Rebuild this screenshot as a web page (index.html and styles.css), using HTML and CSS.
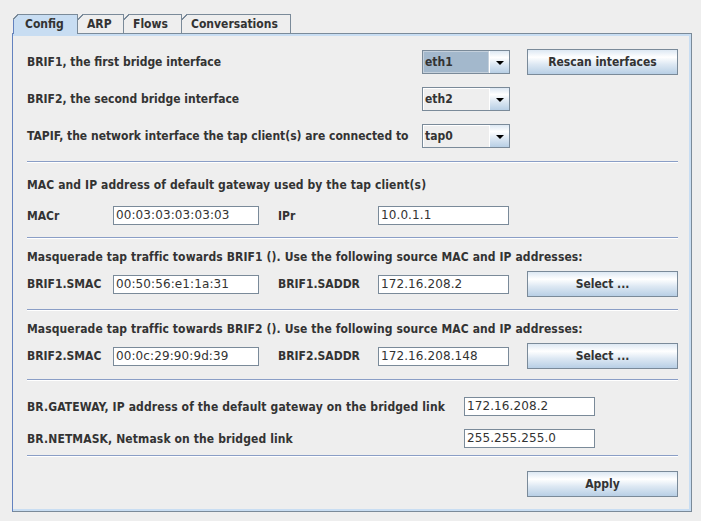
FILE: index.html
```html
<!DOCTYPE html>
<html>
<head>
<meta charset="utf-8">
<link rel="stylesheet" href="styles.css">
</head>
<body>
<div class="tabs">
  <div class="tab sel t-config">Config</div>
  <div class="tab t-arp">ARP</div>
  <div class="tab t-flows">Flows</div>
  <div class="tab t-conv">Conversations</div>
</div>
<div class="panel">
  <div class="content">
    <div class="irow">
      <div class="lbl-if">BRIF1, the first bridge interface</div>
      <div class="combo focus"><div class="cval">eth1</div><div class="carrow"><svg width="8" height="4" viewBox="0 0 8 4"><path d="M0 0h8L4 4z" fill="#000"/></svg></div></div>
      <div class="btn">Rescan interfaces</div>
    </div>
    <div class="irow gap11">
      <div class="lbl-if">BRIF2, the second bridge interface</div>
      <div class="combo"><div class="cval">eth2</div><div class="carrow"><svg width="8" height="4" viewBox="0 0 8 4"><path d="M0 0h8L4 4z" fill="#000"/></svg></div></div>
    </div>
    <div class="irow gap11">
      <div class="lbl-if">TAPIF, the network interface the tap client(s) are connected to</div>
      <div class="combo"><div class="cval">tap0</div><div class="carrow"><svg width="8" height="4" viewBox="0 0 8 4"><path d="M0 0h8L4 4z" fill="#000"/></svg></div></div>
    </div>

    <div class="sep m12"></div>
    <div class="head m14">MAC and IP address of default gateway used by the tap client(s)</div>
    <div class="frow m13">
      <div class="lbl1">MACr</div>
      <div class="field f1">00:03:03:03:03:03</div>
      <div class="lbl2">IPr</div>
      <div class="field f2">10.0.1.1</div>
    </div>

    <div class="sep m12"></div>
    <div class="head m10">Masquerade tap traffic towards BRIF1 (). Use the following source MAC and IP addresses:</div>
    <div class="brow m6">
      <div class="lbl1">BRIF1.SMAC</div>
      <div class="field f1">00:50:56:e1:1a:31</div>
      <div class="lbl2">BRIF1.SADDR</div>
      <div class="field f2">172.16.208.2</div>
      <div class="btn">Select ...</div>
    </div>

    <div class="sep m12"></div>
    <div class="head m10">Masquerade tap traffic towards BRIF2 (). Use the following source MAC and IP addresses:</div>
    <div class="brow m6">
      <div class="lbl1">BRIF2.SMAC</div>
      <div class="field f1">00:0c:29:90:9d:39</div>
      <div class="lbl2">BRIF2.SADDR</div>
      <div class="field f2">172.16.208.148</div>
      <div class="btn">Select ...</div>
    </div>

    <div class="sep m10"></div>
    <div class="frow m16">
      <div class="lbl-gw">BR.GATEWAY, IP address of the default gateway on the bridged link</div>
      <div class="field f2">172.16.208.2</div>
    </div>
    <div class="frow m13">
      <div class="lbl-gw">BR.NETMASK, Netmask on the bridged link</div>
      <div class="field f2">255.255.255.0</div>
    </div>

    <div class="sep m7"></div>
    <div class="brow m14">
      <div class="btn">Apply</div>
    </div>
  </div>
</div>
</body>
</html>
```
FILE: styles.css
```css
html, body {
  margin: 0;
  padding: 0;
}
body {
  width: 701px;
  height: 521px;
  overflow: hidden;
  background: #eeeeee;
  font-family: "DejaVu Sans Condensed", "DejaVu Sans", sans-serif;
  font-stretch: condensed;
  font-weight: bold;
  font-size: 12px;
  color: #333333;
}

/* tabs */
.tabs {
  display: flex;
  align-items: flex-start;
  height: 19px;
  margin: 14px 0 0 13px;
}
.tab {
  position: relative;
  box-sizing: border-box;
  height: 19px;
  border-top: 1px solid #7a8a99;
  border-right: 1px solid #7a8a99;
  padding: 0 0 0 9px;
  line-height: 18px;
  white-space: nowrap;
}
.tab::before {
  content: "";
  position: absolute;
  top: -1px;
  left: 0;
  width: 6px;
  height: 6px;
  background: linear-gradient(to bottom right, #eeeeee 0 40%, #7a8a99 40% 58%, transparent 58%);
}
.tab.sel {
  z-index: 1;
  height: 20px;
  background: #c8ddf2;
  border-left: 1px solid #6382bf;
  padding-left: 11px;
}
.tab.sel::before {
  left: -1px;
}
.t-config { width: 65px; }
.t-arp { width: 46px; }
.t-flows { width: 58px; }
.t-conv { width: 109px; }

/* panel */
.panel {
  box-sizing: border-box;
  width: 680px;
  margin-left: 12px;
  border: 1px solid #7a8a99;
  border-left-color: #6382bf;
}
.content {
  border: 2px solid #c8ddf2;
  border-left: 0;
  padding: 13px 11px 12px 14px;
}

.irow, .brow {
  display: flex;
  align-items: center;
  height: 26px;
}
.frow {
  display: flex;
  align-items: center;
  height: 19px;
}
.gap11 { margin-top: 11px; }
.m6 { margin-top: 6px; }
.m7 { margin-top: 7px; }
.m10 { margin-top: 10px; }
.m12 { margin-top: 12px; }
.m13 { margin-top: 13px; }
.m14 { margin-top: 14px; }
.m16 { margin-top: 16px; }

.head {
  height: 16px;
  line-height: 16px;
  letter-spacing: 0.1px;
  white-space: nowrap;
}
.lbl-if {
  width: 395px;
  white-space: nowrap;
}
.lbl1 {
  width: 86px;
  white-space: nowrap;
}
.lbl2 {
  width: 100px;
  margin-left: 19px;
  white-space: nowrap;
}
.lbl-gw {
  width: 437px;
  letter-spacing: 0.12px;
  white-space: nowrap;
}

.sep {
  height: 2px;
  box-sizing: border-box;
  border-top: 1px solid #8a9ec6;
  border-bottom: 1px solid #ffffff;
}

/* text fields */
.field {
  box-sizing: border-box;
  height: 19px;
  border: 1px solid #7a8a99;
  background: #ffffff;
  font-family: "DejaVu Sans", sans-serif;
  font-stretch: normal;
  font-weight: normal;
  font-size: 12px;
  letter-spacing: 0.1px;
  line-height: 17px;
  padding-left: 2px;
  color: #333333;
  white-space: nowrap;
  overflow: hidden;
}
.f1 { width: 146px; }
.f2 { width: 131px; }

/* combo box */
.combo {
  display: flex;
  box-sizing: border-box;
  width: 88px;
  height: 24px;
  border: 1px solid #7a8a99;
  background: #eeeeee;
}
.cval {
  flex: 1;
  padding-left: 2px;
  line-height: 22px;
  box-shadow: inset 1px 1px 0 #ffffff;
}
.combo.focus .cval {
  background: #a3b8cc;
  box-shadow: inset 0 0 0 1px #c4d0dc;
}
.carrow {
  width: 20px;
  box-sizing: border-box;
  border-left: 1px solid #ffffff;
  background: linear-gradient(#dde8f3 0%, #ffffff 30%, #dde8f3 60%, #b8cfe5 100%);
  display: flex;
  align-items: center;
  justify-content: center;
  padding-top: 1px;
}
.carrow svg { display: block; }

/* buttons */
.btn {
  box-sizing: border-box;
  width: 151px;
  height: 26px;
  margin-left: auto;
  border: 1px solid #7a8a99;
  background: linear-gradient(#dde8f3 0%, #ffffff 30%, #dde8f3 60%, #b8cfe5 100%);
  text-align: center;
  line-height: 24px;
  white-space: nowrap;
}
.irow .btn {
  margin-left: 17px;
}
```
